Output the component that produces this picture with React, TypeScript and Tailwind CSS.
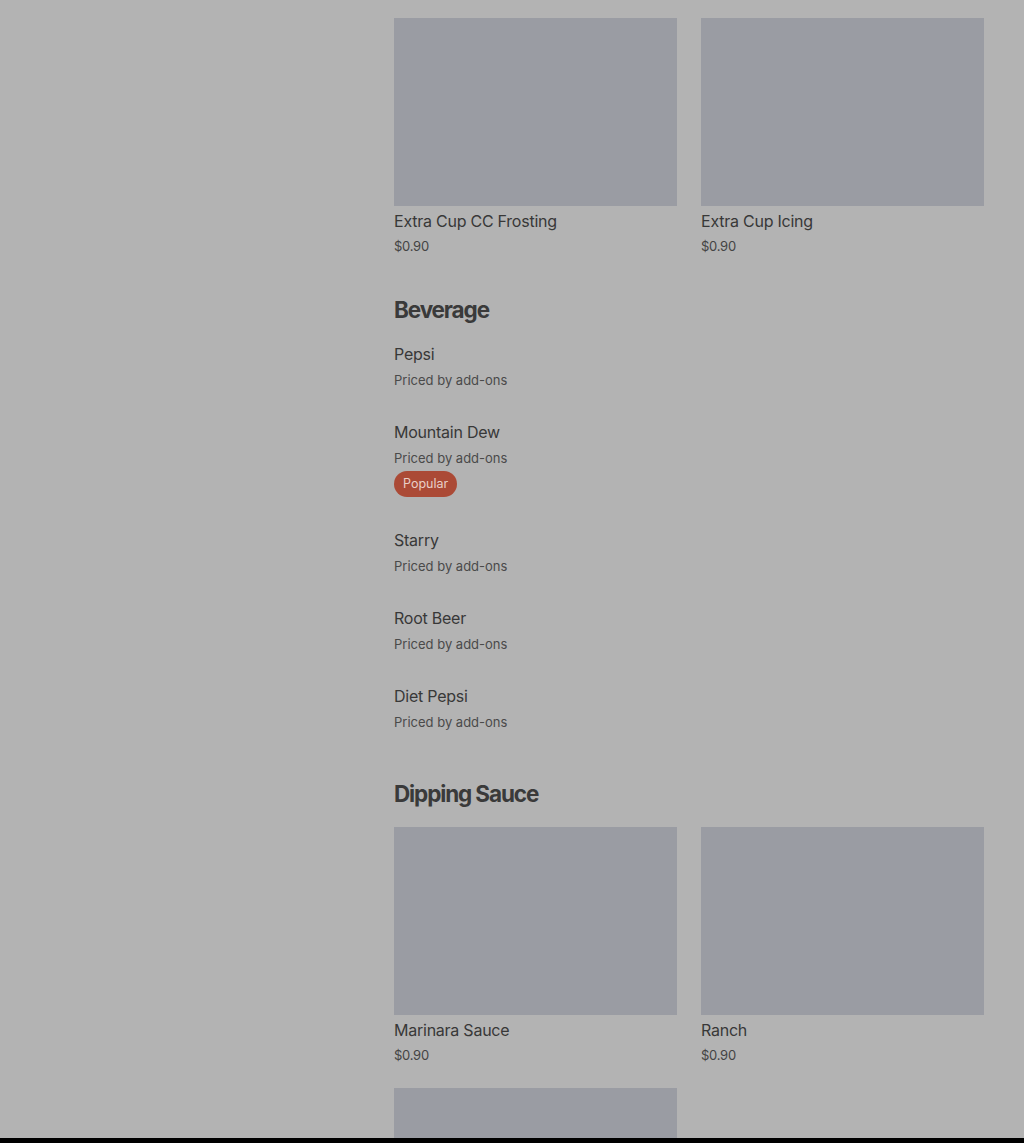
const font = { fontFamily: "Inter, 'Liberation Sans', sans-serif" };

type Item = { name: string; price: string; popular?: boolean };

const Card = ({ item }: { item: Item }) => (
    <div className="flex flex-col">
        <div className="h-[188px] w-full bg-[#9a9ca3]" />
        <p className="mt-[3px] text-[16px] leading-6 text-[#383838] tracking-[-0.015em]">{item.name}</p>
        <p className="mt-[3px] text-[13px] leading-5 text-[#444] tracking-[-0.02em]">{item.price}</p>
    </div>
);

const Row = ({ item }: { item: Item }) => (
    <div className="flex flex-col">
        <p className="text-[16px] leading-6 text-[#383838] tracking-[-0.015em]">{item.name}</p>
        <p className="mt-[4px] text-[13px] leading-5 text-[#4a4a4a]">{item.price}</p>
        {item.popular && (
            <span className="mt-[3px] mb-[1px] self-start rounded-full bg-[#ab4a36] px-[9px] text-[12.5px] leading-[26px] text-[#e9cfc7]">
                Popular
            </span>
        )}
    </div>
);

const beverages: Item[] = [
    { name: "Pepsi", price: "Priced by add-ons" },
    { name: "Mountain Dew", price: "Priced by add-ons", popular: true },
    { name: "Starry", price: "Priced by add-ons" },
    { name: "Root Beer", price: "Priced by add-ons" },
    { name: "Diet Pepsi", price: "Priced by add-ons" },
];

const sauces: Item[] = [
    { name: "Marinara Sauce", price: "$0.90" },
    { name: "Ranch", price: "$0.90" },
];

export default function App() {
    return (
        <div className="relative h-[1143px] w-full overflow-hidden bg-[#b3b3b3]" style={font}>
            <div className="flex">
                <div className="w-[394px] shrink-0" />
                <main className="flex w-[590px] flex-col pt-[18px]">
                    {/* Extras */}
                    <div className="grid grid-cols-2 gap-x-6">
                        <Card item={{ name: "Extra Cup CC Frosting", price: "$0.90" }} />
                        <Card item={{ name: "Extra Cup Icing", price: "$0.90" }} />
                    </div>

                    {/* Beverage */}
                    <h2 className="mt-[38px] text-[22.5px] font-bold leading-8 tracking-[-0.05em] text-[#3a3a3a]">
                        Beverage
                    </h2>
                    <div className="mt-4 flex flex-col gap-[30px]">
                        {beverages.map((b) => (
                            <Row key={b.name} item={b} />
                        ))}
                    </div>

                    {/* Dipping Sauce */}
                    <h2 className="mt-[46px] text-[22.5px] font-bold leading-8 tracking-[-0.05em] text-[#3a3a3a]">
                        Dipping Sauce
                    </h2>
                    <div className="mt-[17px] grid grid-cols-2 gap-x-6 gap-y-[23px]">
                        {sauces.map((s) => (
                            <Card key={s.name} item={s} />
                        ))}
                        <div className="h-[188px] w-full bg-[#9a9ca3]" />
                    </div>
                </main>
            </div>
            <div className="absolute bottom-0 left-0 h-[5px] w-full bg-black" />
        </div>
    );
}
